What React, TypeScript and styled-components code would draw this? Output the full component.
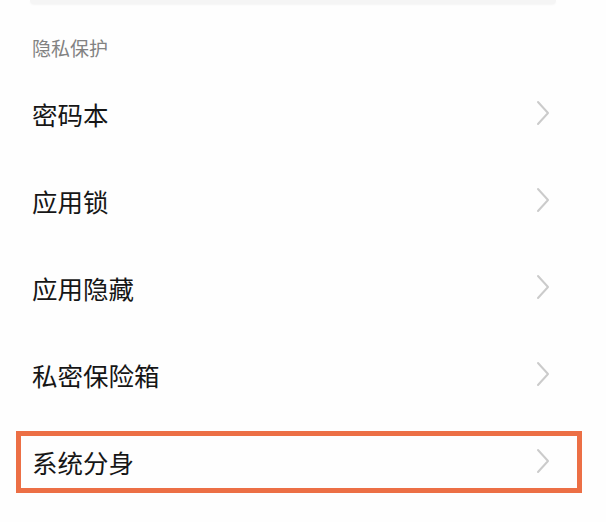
import styled, { createGlobalStyle } from 'styled-components';

const GlobalStyle = createGlobalStyle`
  html, body {
    margin: 0;
    padding: 0;
    background: #fefefe;
  }
  body {
    font-family: "Noto Sans CJK SC", "Noto Sans", sans-serif;
    color: #1a1a1a;
  }
`;

const Page = styled.div`
  width: 606px;
  height: 522px;
  overflow: hidden;
  background: #fefefe;
`;

// tail of the previous group, cut off by the screenshot
const PrevCard = styled.div`
  margin: 0 50px 0 30px;
  height: 4px;
  background: #f5f5f5;
  border-radius: 0 0 6px 6px;
  box-shadow: 0 1px 2px rgba(0, 0, 0, 0.04);
`;

const SectionTitle = styled.div`
  padding: 32px 0 0 32px;
  font-size: 19px;
  line-height: 24px;
  color: #828282;
`;

const List = styled.div`
  margin-top: 9.5px;
`;

const Row = styled.div<{ $highlight?: boolean }>`
  position: relative;
  height: 87px;
  display: flex;
  align-items: center;
  justify-content: space-between;
  padding: 0 56px 0 32px;
  box-sizing: border-box;
  font-size: 25.5px;
  color: #161616;

  ${p => p.$highlight && `
    &::after {
      content: '';
      position: absolute;
      left: 16px;
      right: 24px;
      top: 13px;
      height: 62px;
      border: 5px solid #ec6f45;
      box-sizing: border-box;
    }
  `}
`;

const Chevron = () => (
  <svg width="14" height="26" viewBox="0 0 14 26" fill="none">
    <polyline points="2,2 12,13 2,24" stroke="#cbcbcb" strokeWidth="2" strokeLinecap="round" strokeLinejoin="round" />
  </svg>
);

const items = ['密码本', '应用锁', '应用隐藏', '私密保险箱', '系统分身'];

export default function App() {
  return (
    <>
      <GlobalStyle />
      <Page>
        <PrevCard />
        <SectionTitle>隐私保护</SectionTitle>
        <List>
          {items.map((label, i) => (
            <Row key={label} $highlight={i === items.length - 1}>
              <span>{label}</span>
              <Chevron />
            </Row>
          ))}
        </List>
      </Page>
    </>
  );
}
